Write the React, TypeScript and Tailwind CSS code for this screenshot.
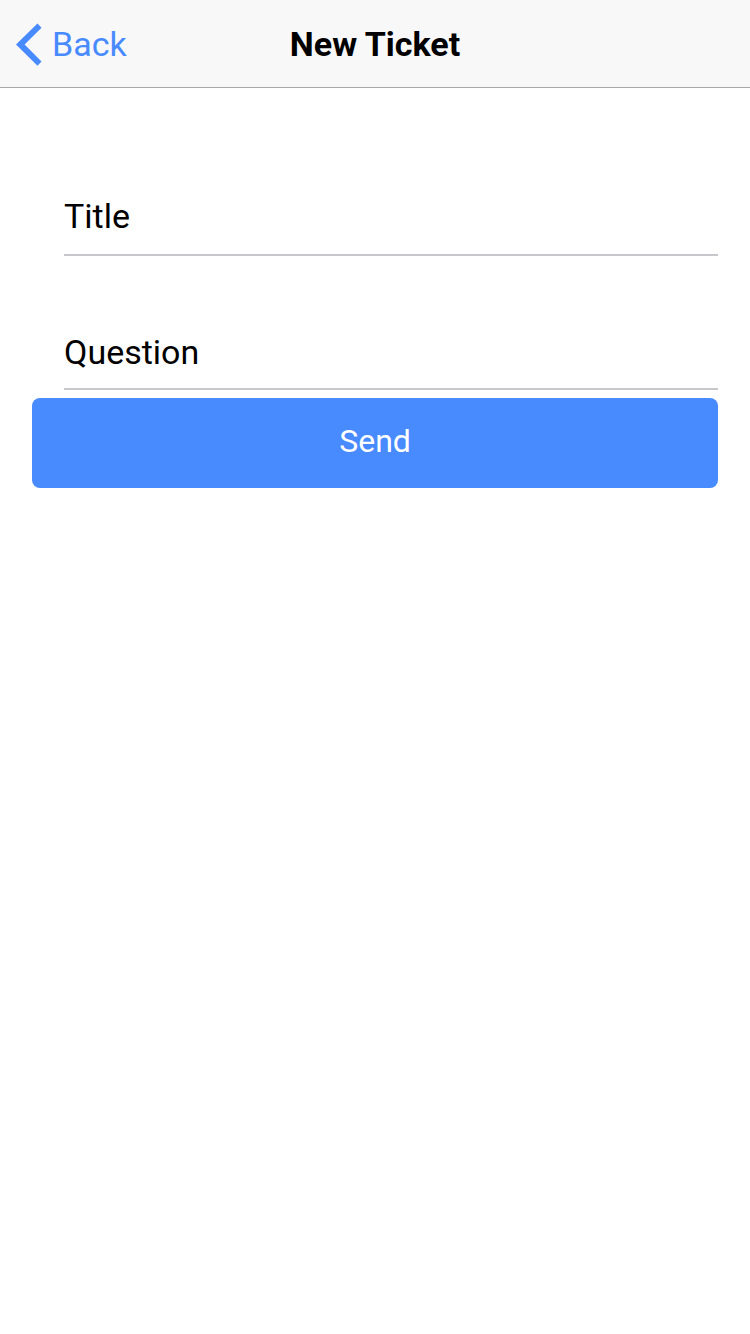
import React, { useState } from "react";

export default function App() {
  const [title, setTitle] = useState("");
  const [question, setQuestion] = useState("");

  const handleSubmit = (e: React.FormEvent) => {
    e.preventDefault();
    if (!title.trim() || !question.trim()) return;
    setTitle("");
    setQuestion("");
  };

  return (
    <div className="min-h-screen bg-white font-[Roboto,sans-serif] text-black">
      {/* Header */}
      <header className="grid grid-cols-3 items-center h-[88px] px-4 bg-[#f8f8f8] border-b border-[#a9a9a9]">
        <button
          type="button"
          onClick={() => window.history.back()}
          className="flex items-center gap-2.5 justify-self-start text-[34px] leading-10 text-[#488aff] cursor-pointer"
        >
          <svg viewBox="0 0 26 44" className="w-[26px] h-11" fill="currentColor" aria-hidden="true">
            <path d="M21.5 1.5 0 22.6l21.5 21.1 4-4.2L8.6 22.6 25.5 5.7z" />
          </svg>
          Back
        </button>
        <h1 className="text-center text-[34px] leading-10 font-bold whitespace-nowrap">New Ticket</h1>
      </header>

      {/* Form */}
      <form onSubmit={handleSubmit} className="px-8 pt-8">
        <div className="flex items-center ml-8 pt-[76px] pb-[18px] border-b-2 border-[#c8c7cc]">
          <label htmlFor="title" className="text-[34px] leading-10">
            Title
          </label>
          <input
            id="title"
            type="text"
            value={title}
            onChange={(e) => setTitle(e.target.value)}
            className="flex-1 min-w-0 h-10 ml-4 text-[34px] leading-10 outline-none"
          />
        </div>
        <div className="flex items-center ml-8 pt-[76px] pb-4 border-b-2 border-[#c8c7cc]">
          <label htmlFor="question" className="text-[34px] leading-10">
            Question
          </label>
          <input
            id="question"
            type="text"
            value={question}
            onChange={(e) => setQuestion(e.target.value)}
            className="flex-1 min-w-0 h-10 ml-4 text-[34px] leading-10 outline-none"
          />
        </div>
        <button
          type="submit"
          className="w-full h-[90px] mt-2 pb-1 bg-[#488aff] rounded-lg text-[32px] leading-10 text-white cursor-pointer"
        >
          Send
        </button>
      </form>
    </div>
  );
}
